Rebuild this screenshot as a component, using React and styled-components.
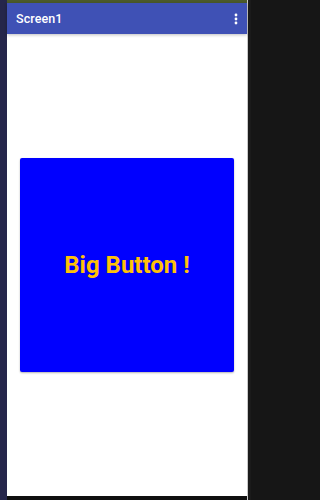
import React from 'react'
import styled, { createGlobalStyle } from 'styled-components'

const Global = createGlobalStyle`
  html, body {
    margin: 0;
    padding: 0;
    background: #161616;
    font-family: Roboto, "Liberation Sans", sans-serif;
  }
`

const Frame = styled.div`
  display: flex;
  width: 251px;
  height: 500px;
  overflow: hidden;
`

const LeftEdge = styled.div`
  width: 7px;
  background: #25264b;
`

const Phone = styled.div`
  display: flex;
  flex-direction: column;
  width: 240px;
`

const RightEdge = styled.div`
  width: 4px;
  display: flex;
  flex-direction: column;
  background: #1b1b1b;
  border-left: 1px solid #c9c9c9;
  box-sizing: border-box;
`

const StatusStrip = styled.div`
  height: 3px;
  background: #4b5a2a;
`

const AppBar = styled.div`
  height: 31px;
  display: flex;
  align-items: center;
  justify-content: space-between;
  padding: 0 9px 0 9px;
  background: #3f51b5;
  box-shadow: 0 1px 3px rgba(0, 0, 0, 0.25);
  position: relative;
  z-index: 1;
`

const Title = styled.span`
  color: #fff;
  font-size: 12.5px;
  font-weight: 500;
  letter-spacing: 0.1px;
`

const Content = styled.div`
  flex: 1;
  background: #fff;
  display: flex;
  align-items: center;
  justify-content: center;
`

const BigButton = styled.button`
  width: 214px;
  height: 214px;
  border: none;
  border-radius: 2px;
  background: #0000ff;
  color: #ffc107;
  font-family: Roboto, "Liberation Sans", sans-serif;
  font-weight: 700;
  font-size: 24px;
  box-shadow: 0 1px 2px rgba(0, 0, 0, 0.3);
  cursor: pointer;
`

const BottomStrip = styled.div`
  height: 4px;
  background: #0f0f0f;
`

function MenuDots() {
  return (
    <svg width="4" height="12" viewBox="0 0 4 12">
      <circle cx="2" cy="2" r="1.4" fill="#fff" />
      <circle cx="2" cy="6" r="1.4" fill="#fff" />
      <circle cx="2" cy="10" r="1.4" fill="#fff" />
    </svg>
  )
}

export default function App() {
  return (
    <>
      <Global />
      <Frame>
        <LeftEdge />
        <Phone>
          <StatusStrip />
          <AppBar>
            <Title>Screen1</Title>
            <MenuDots />
          </AppBar>
          <Content>
            <BigButton>Big Button !</BigButton>
          </Content>
          <BottomStrip />
        </Phone>
        <RightEdge />
      </Frame>
    </>
  )
}
